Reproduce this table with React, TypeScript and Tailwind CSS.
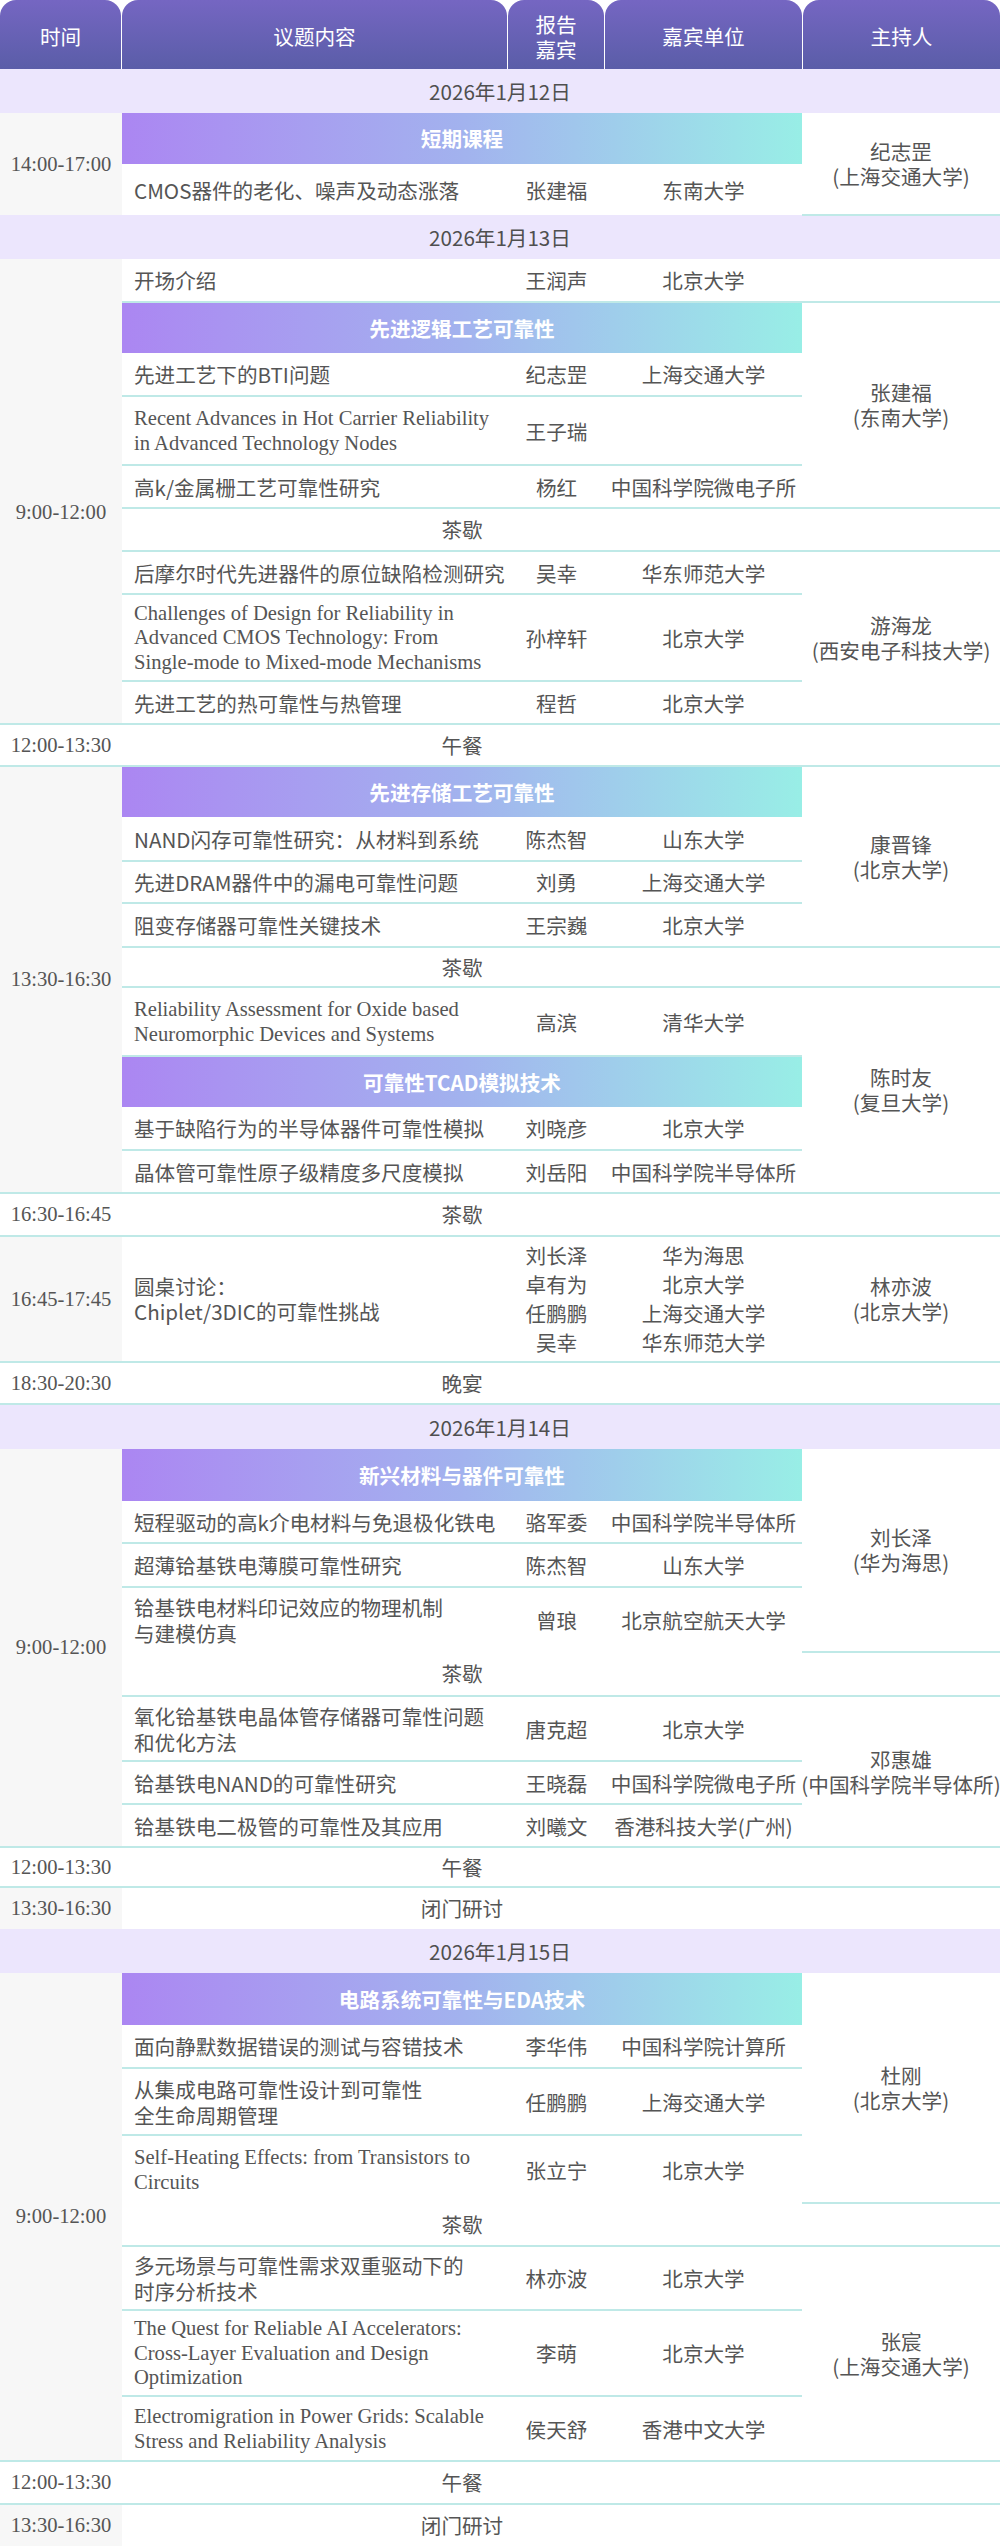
import React from 'react'

// Shared class strings
const cjk = "font-['Noto_Sans_CJK_SC',sans-serif]"
const serif = "font-['Liberation_Serif',serif]"
const line = 'border-b-2 border-[#bfe9e7]'
const fullLine = 'border-y-2 border-[#bfe9e7]'
const topLine = 'border-t-2 border-[#bfe9e7]'
const txt = 'text-[20.6px] text-[#555]'

interface TimeCell {
  text: string
  span: number
  gray?: boolean
}

interface HostCell {
  name?: string
  org?: string
  span: number
}

type Row =
  | { kind: 'date'; text: string; h: string }
  | { kind: 'banner'; text: string; h: string; time?: TimeCell; host?: HostCell }
  | {
      kind: 'talk'
      lines: string[]
      en?: boolean
      speakers: string[]
      units: string[]
      h: string
      line?: boolean
      time?: TimeCell
      host?: HostCell
      panel?: boolean
    }
  | { kind: 'break'; text: string; h: string; time?: TimeCell; host?: HostCell }
  | { kind: 'full'; text: string; time: string; gray?: boolean; h: string; bottom?: boolean }

const rows: Row[] = [
  // 1月12日
  { kind: 'date', text: '2026年1月12日', h: 'h-[44px]' },
  {
    kind: 'banner',
    text: '短期课程',
    h: 'h-[51px]',
    time: { text: '14:00-17:00', span: 2, gray: true },
    host: { name: '纪志罡', org: '上海交通大学', span: 2 },
  },
  { kind: 'talk', lines: ['CMOS器件的老化、噪声及动态涨落'], speakers: ['张建福'], units: ['东南大学'], h: 'h-[51px]' },

  // 1月13日
  { kind: 'date', text: '2026年1月13日', h: 'h-[44px]' },
  {
    kind: 'talk',
    lines: ['开场介绍'],
    speakers: ['王润声'],
    units: ['北京大学'],
    h: 'h-[43px]',
    line: true,
    time: { text: '', span: 1, gray: true },
    host: { span: 1 },
  },
  {
    kind: 'banner',
    text: '先进逻辑工艺可靠性',
    h: 'h-[51px]',
    time: { text: '9:00-12:00', span: 8, gray: true },
    host: { name: '张建福', org: '东南大学', span: 4 },
  },
  { kind: 'talk', lines: ['先进工艺下的BTI问题'], speakers: ['纪志罡'], units: ['上海交通大学'], h: 'h-[43px]', line: true },
  {
    kind: 'talk',
    en: true,
    lines: ['Recent Advances in Hot Carrier Reliability', 'in Advanced Technology Nodes'],
    speakers: ['王子瑞'],
    units: [''],
    h: 'h-[69px]',
    line: true,
  },
  { kind: 'talk', lines: ['高k/金属栅工艺可靠性研究'], speakers: ['杨红'], units: ['中国科学院微电子所'], h: 'h-[43px]', line: true },
  { kind: 'break', text: '茶歇', h: 'h-[43px]', host: { span: 1 } },
  {
    kind: 'talk',
    lines: ['后摩尔时代先进器件的原位缺陷检测研究'],
    speakers: ['吴幸'],
    units: ['华东师范大学'],
    h: 'h-[43px]',
    line: true,
    host: { name: '游海龙', org: '西安电子科技大学', span: 3 },
  },
  {
    kind: 'talk',
    en: true,
    lines: ['Challenges of Design for Reliability in', 'Advanced CMOS Technology: From', 'Single-mode to Mixed-mode Mechanisms'],
    speakers: ['孙梓轩'],
    units: ['北京大学'],
    h: 'h-[87px]',
    line: true,
  },
  { kind: 'talk', lines: ['先进工艺的热可靠性与热管理'], speakers: ['程哲'], units: ['北京大学'], h: 'h-[43px]' },
  { kind: 'full', text: '午餐', time: '12:00-13:30', h: 'h-[42px]', bottom: true },
  {
    kind: 'banner',
    text: '先进存储工艺可靠性',
    h: 'h-[51px]',
    time: { text: '13:30-16:30', span: 9, gray: true },
    host: { name: '康晋锋', org: '北京大学', span: 4 },
  },
  { kind: 'talk', lines: ['NAND闪存可靠性研究：从材料到系统'], speakers: ['陈杰智'], units: ['山东大学'], h: 'h-[44px]', line: true },
  { kind: 'talk', lines: ['先进DRAM器件中的漏电可靠性问题'], speakers: ['刘勇'], units: ['上海交通大学'], h: 'h-[42px]', line: true },
  { kind: 'talk', lines: ['阻变存储器可靠性关键技术'], speakers: ['王宗巍'], units: ['北京大学'], h: 'h-[44px]', line: true },
  { kind: 'break', text: '茶歇', h: 'h-[40px]', host: { span: 1 } },
  {
    kind: 'talk',
    en: true,
    lines: ['Reliability Assessment for Oxide based', 'Neuromorphic Devices and Systems'],
    speakers: ['高滨'],
    units: ['清华大学'],
    h: 'h-[69px]',
    line: true,
    host: { name: '陈时友', org: '复旦大学', span: 4 },
  },
  { kind: 'banner', text: '可靠性TCAD模拟技术', h: 'h-[51px]' },
  { kind: 'talk', lines: ['基于缺陷行为的半导体器件可靠性模拟'], speakers: ['刘晓彦'], units: ['北京大学'], h: 'h-[43px]', line: true },
  { kind: 'talk', lines: ['晶体管可靠性原子级精度多尺度模拟'], speakers: ['刘岳阳'], units: ['中国科学院半导体所'], h: 'h-[43px]' },
  { kind: 'full', text: '茶歇', time: '16:30-16:45', h: 'h-[43px]', bottom: true },
  {
    kind: 'talk',
    panel: true,
    lines: ['圆桌讨论：', 'Chiplet/3DIC的可靠性挑战'],
    speakers: ['刘长泽', '卓有为', '任鹏鹏', '吴幸'],
    units: ['华为海思', '北京大学', '上海交通大学', '华东师范大学'],
    h: 'h-[126px]',
    time: { text: '16:45-17:45', span: 1, gray: true },
    host: { name: '林亦波', org: '北京大学', span: 1 },
  },
  { kind: 'full', text: '晚宴', time: '18:30-20:30', h: 'h-[42px]', bottom: true },

  // 1月14日
  { kind: 'date', text: '2026年1月14日', h: 'h-[45px]' },
  {
    kind: 'banner',
    text: '新兴材料与器件可靠性',
    h: 'h-[52px]',
    time: { text: '9:00-12:00', span: 8, gray: true },
    host: { name: '刘长泽', org: '华为海思', span: 4 },
  },
  { kind: 'talk', lines: ['短程驱动的高k介电材料与免退极化铁电'], speakers: ['骆军委'], units: ['中国科学院半导体所'], h: 'h-[42px]', line: true },
  { kind: 'talk', lines: ['超薄铪基铁电薄膜可靠性研究'], speakers: ['陈杰智'], units: ['山东大学'], h: 'h-[44px]', line: true },
  {
    kind: 'talk',
    lines: ['铪基铁电材料印记效应的物理机制', '与建模仿真'],
    speakers: ['曾琅'],
    units: ['北京航空航天大学'],
    h: 'h-[65px]',
  },
  { kind: 'break', text: '茶歇', h: 'h-[44px]', host: { span: 1 } },
  {
    kind: 'talk',
    lines: ['氧化铪基铁电晶体管存储器可靠性问题', '和优化方法'],
    speakers: ['唐克超'],
    units: ['北京大学'],
    h: 'h-[65px]',
    line: true,
    host: { name: '邓惠雄', org: '中国科学院半导体所', span: 3 },
  },
  { kind: 'talk', lines: ['铪基铁电NAND的可靠性研究'], speakers: ['王晓磊'], units: ['中国科学院微电子所'], h: 'h-[43px]', line: true },
  { kind: 'talk', lines: ['铪基铁电二极管的可靠性及其应用'], speakers: ['刘曦文'], units: ['香港科技大学(广州)'], h: 'h-[43px]' },
  { kind: 'full', text: '午餐', time: '12:00-13:30', h: 'h-[40px]', bottom: true },
  { kind: 'full', text: '闭门研讨', time: '13:30-16:30', gray: true, h: 'h-[42px]' },

  // 1月15日
  { kind: 'date', text: '2026年1月15日', h: 'h-[44px]' },
  {
    kind: 'banner',
    text: '电路系统可靠性与EDA技术',
    h: 'h-[52px]',
    time: { text: '9:00-12:00', span: 8, gray: true },
    host: { name: '杜刚', org: '北京大学', span: 4 },
  },
  { kind: 'talk', lines: ['面向静默数据错误的测试与容错技术'], speakers: ['李华伟'], units: ['中国科学院计算所'], h: 'h-[43px]', line: true },
  {
    kind: 'talk',
    lines: ['从集成电路可靠性设计到可靠性', '全生命周期管理'],
    speakers: ['任鹏鹏'],
    units: ['上海交通大学'],
    h: 'h-[67px]',
    line: true,
  },
  {
    kind: 'talk',
    en: true,
    lines: ['Self-Heating Effects: from Transistors to', 'Circuits'],
    speakers: ['张立宁'],
    units: ['北京大学'],
    h: 'h-[68px]',
  },
  { kind: 'break', text: '茶歇', h: 'h-[43px]', host: { span: 1 } },
  {
    kind: 'talk',
    lines: ['多元场景与可靠性需求双重驱动下的', '时序分析技术'],
    speakers: ['林亦波'],
    units: ['北京大学'],
    h: 'h-[64px]',
    line: true,
    host: { name: '张宸', org: '上海交通大学', span: 3 },
  },
  {
    kind: 'talk',
    en: true,
    lines: ['The Quest for Reliable AI Accelerators:', 'Cross-Layer Evaluation and Design', 'Optimization'],
    speakers: ['李萌'],
    units: ['北京大学'],
    h: 'h-[86px]',
    line: true,
  },
  {
    kind: 'talk',
    en: true,
    lines: ['Electromigration in Power Grids: Scalable', 'Stress and Reliability Analysis'],
    speakers: ['侯天舒'],
    units: ['香港中文大学'],
    h: 'h-[65px]',
  },
  { kind: 'full', text: '午餐', time: '12:00-13:30', h: 'h-[43px]', bottom: true },
  { kind: 'full', text: '闭门研讨', time: '13:30-16:30', gray: true, h: 'h-[42px]' },
]

function TimeTd({ t }: { t: TimeCell }) {
  return (
    <td
      rowSpan={t.span}
      className={`${t.gray ? 'bg-[#f7f7f7]' : 'bg-white'} text-center whitespace-nowrap ${serif} ${txt}`}
    >
      {t.text}
    </td>
  )
}

function HostTd({ h }: { h: HostCell }) {
  return (
    <td rowSpan={h.span} className={`${line} bg-white`}>
      {h.name && (
        <div className={`flex flex-col items-center whitespace-nowrap leading-[25px] ${cjk} ${txt}`}>
          <span>{h.name}</span>
          <span>({h.org})</span>
        </div>
      )}
    </td>
  )
}

function Header() {
  const cells = [
    { w: 'w-[121px]', label: ['时间'] },
    { w: 'w-[385px]', label: ['议题内容'] },
    { w: 'w-[96px]', label: ['报告', '嘉宾'] },
    { w: 'w-[197px]', label: ['嘉宾单位'] },
    { w: 'w-[197px]', label: ['主持人'] },
  ]
  return (
    <div className="flex h-[69px] gap-px bg-white">
      {cells.map((c) => (
        <div
          key={c.label.join('')}
          className={`${c.w} flex shrink-0 flex-col items-center justify-center rounded-t-[16px] bg-linear-to-b from-[#7566c2] to-[#5a5da8] pt-1 text-[20.6px] leading-[25px] text-white ${cjk}`}
        >
          {c.label.map((l) => (
            <span key={l}>{l}</span>
          ))}
        </div>
      ))}
    </div>
  )
}

function renderRow(r: Row, i: number) {
  switch (r.kind) {
    case 'date':
      return (
        <tr key={i} className={r.h}>
          <td colSpan={5} className={`bg-[#ece6fd] text-center ${cjk} text-[20.6px] text-[#4f4f4f]`}>
            {r.text}
          </td>
        </tr>
      )
    case 'banner':
      return (
        <tr key={i} className={r.h}>
          {r.time && <TimeTd t={r.time} />}
          <td
            colSpan={3}
            className={`bg-linear-to-r from-[#ab86f2] via-[#a2b2ee] to-[#98eee6] text-center text-[20.6px] font-bold text-white ${cjk}`}
          >
            {r.text}
          </td>
          {r.host && <HostTd h={r.host} />}
        </tr>
      )
    case 'talk': {
      const b = r.line ? line : ''
      const topicFont = r.en ? `${serif} leading-[24.5px]` : r.panel ? `${cjk} leading-[25px]` : `${cjk} leading-[26px]`
      const listLead = r.panel ? 'leading-[29px]' : 'leading-[26px]'
      return (
        <tr key={i} className={r.h}>
          {r.time && <TimeTd t={r.time} />}
          <td className={`${b} bg-white pl-3 whitespace-nowrap ${topicFont} ${txt}`}>
            {r.lines.map((l, k) => (
              <div key={k}>{l}</div>
            ))}
          </td>
          <td className={`${b} bg-white text-center whitespace-nowrap ${cjk} ${listLead} ${txt}`}>
            {r.speakers.map((s, k) => (
              <div key={k}>{s}</div>
            ))}
          </td>
          <td className={`${b} bg-white text-center whitespace-nowrap ${cjk} ${listLead} ${txt}`}>
            {r.units.map((u, k) => (
              <div key={k}>{u}</div>
            ))}
          </td>
          {r.host && <HostTd h={r.host} />}
        </tr>
      )
    }
    case 'break':
      return (
        <tr key={i} className={r.h}>
          {r.time && <TimeTd t={r.time} />}
          <td colSpan={3} className={`${line} bg-white text-center ${cjk} ${txt}`}>
            {r.text}
          </td>
          {r.host && <HostTd h={r.host} />}
        </tr>
      )
    case 'full': {
      const b = r.bottom ? fullLine : topLine
      return (
        <tr key={i} className={r.h}>
          <td className={`${b} ${r.gray ? 'bg-[#f7f7f7]' : 'bg-white'} text-center whitespace-nowrap ${serif} ${txt}`}>
            {r.time}
          </td>
          <td colSpan={3} className={`${b} bg-white text-center ${cjk} ${txt}`}>
            {r.text}
          </td>
          <td className={`${b} bg-white`} />
        </tr>
      )
    }
  }
}

export default function App() {
  return (
    <div className="w-[1000px] bg-white">
      <Header />
      <table className="w-[1000px] table-fixed border-collapse">
        <colgroup>
          <col className="w-[122px]" />
          <col className="w-[386px]" />
          <col className="w-[97px]" />
          <col className="w-[197px]" />
          <col className="w-[198px]" />
        </colgroup>
        <tbody>{rows.map(renderRow)}</tbody>
      </table>
    </div>
  )
}
